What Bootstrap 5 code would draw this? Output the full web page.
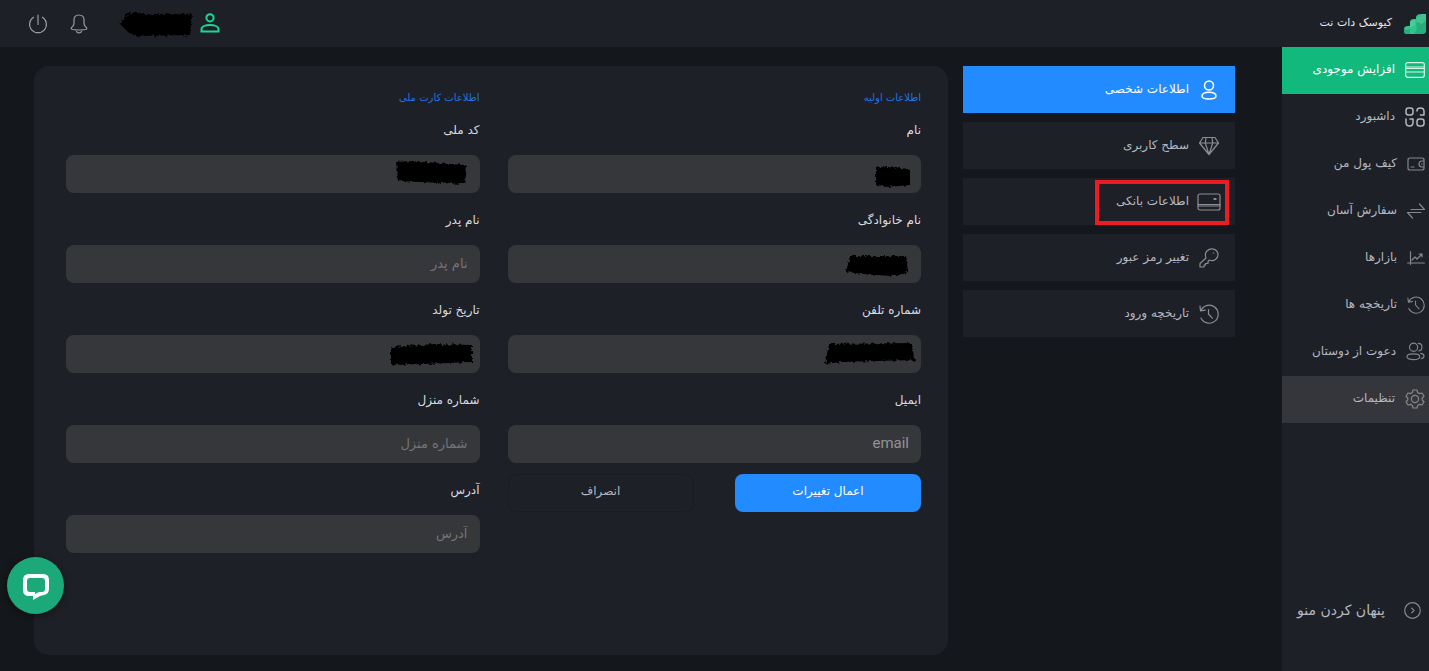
<!DOCTYPE html>
<html lang="fa" dir="rtl">
<head>
<meta charset="utf-8">
<meta name="viewport" content="width=device-width, initial-scale=1">
<title>کیوسک دات نت</title>
<link href="https://cdn.jsdelivr.net/npm/bootstrap@5.3.0/dist/css/bootstrap.min.css" rel="stylesheet">
<style>
  :root { --page: #14171b; --panel: #1e2027; --field: #36373b; --blue: #228bff; --green: #12b97c; --ink: #b4b8c2; }
  body { background: var(--page); color: var(--ink); font-family: "DejaVu Sans", sans-serif; font-size: 12px; line-height: 20px; }
  svg { flex: none; fill: none; stroke: currentColor; stroke-linecap: round; stroke-linejoin: round; stroke-width: 1.2; }
  .topbar { background: var(--panel); height: 47px; padding: 0 2px 0 28px; }
  .brand { color: #e6e8ec; font-size: 11px; gap: 11px; }
  .icon-btn { background: none; border: 0; padding: 0; color: #9a9ca1; display: flex; margin-right: 22px; }
  .account { color: #19d896; stroke-width: 2; stroke-linejoin: miter; margin-bottom: 2px; }
  .side { background: var(--panel); width: 147px; flex: none; }
  .side a { color: var(--ink); text-decoration: none; height: 47px; padding: 0 4px 2px 0; gap: 10px; display: flex; align-items: center; white-space: nowrap; }
  .side a span, .setting span, .brand span { margin-bottom: 2px; }
  .side svg { color: #85878d; }
  .side a.topup { background: var(--green); color: #fff; }
  .side a.topup svg { color: #d6f5e8; }
  .side a.dash svg { color: #b4b6bc; stroke-width: 1.5; }
  .side a.current { background: #35363b; }
  .side a.fold { font-size: 14px; padding-right: 8px; gap: 19px; margin-bottom: 36px; }
  .content-area { padding: 19px 47px 16px 34px; gap: 15px; }
  .settings { width: 272px; flex: none; gap: 9px; }
  .setting { position: relative; background: var(--panel); color: var(--ink); text-decoration: none; height: 47px; padding: 0 14px; gap: 8px; }
  .setting svg { color: #8c8d91; }
  .setting.on { background: var(--blue); color: #fff; }
  .setting.on svg { color: #fff; stroke-width: 1.5; }
  .highlight { position: absolute; top: 2px; right: 6px; width: 134px; height: 45px; border: 4px solid #ec1c24; pointer-events: none; }
  .profile { background: var(--panel); border-radius: 15px; padding: 22px 27px 22px 32px; }
  .fields { display: grid; grid-template-columns: 1fr 1fr; gap: 28px; }
  .fields h2 { color: #2273e6; font-size: 10px; line-height: 20px; margin: 0 0 11px; font-weight: 400; }
  .field { position: relative; margin-bottom: 16px; }
  .field label { display: block; color: #d9dbe0; margin-bottom: 14px; height: 22px; line-height: 22px; }
  .field .form-control { background: var(--field); border: 0; border-radius: 8px; color: #e6e8ec; height: 38px; padding: 0 12px 2px; font-size: 13px; box-shadow: none; }
  .field .form-control::placeholder { color: #74757a; opacity: 1; }
  .field .latin { font-family: Roboto, sans-serif; font-size: 15px; }
  .field .latin::placeholder { color: #929398; }
  .ink { position: absolute; fill: #000; stroke: none; bottom: 4px; }
  .actions { margin-top: -5px; }
  .actions .btn { width: 45%; height: 38px; border-radius: 8px; font-size: 12px; padding: 0 0 4px; }
  .save { background: var(--blue); color: #fff; }
  .cancel { border: 1px solid #1a1c22; color: var(--ink); }
  .chat { position: fixed; left: 7px; bottom: 57px; width: 57px; height: 57px; border: 0; border-radius: 50%; background: #1ca97a; box-shadow: 0 2px 8px #0006; padding: 0; display: flex; align-items: center; justify-content: center; }
</style>
</head>
<body>
<svg width="0" height="0" class="position-absolute" aria-hidden="true">
  <filter id="rough" x="-10%" y="-20%" width="120%" height="140%"><feTurbulence type="fractalNoise" baseFrequency=".3" numOctaves="2" seed="4"/><feDisplacementMap in="SourceGraphic" scale="5"/><feGaussianBlur stdDeviation=".7"/></filter>
  <symbol id="history" viewBox="0 0 20 20"><path d="M2.200 6A9 9 0 1 1 2 14M1 2.200l.6 4.600 4.600-.6M9.500 5.500V10l3.800 4.200"/></symbol>
</svg>
<div class="d-flex flex-column min-vh-100">
  <header class="topbar d-flex align-items-center justify-content-between">
    <div class="brand d-flex align-items-center">
      <svg width="24" height="22" viewBox="0 0 24 22"><g stroke="none"><path fill="#2fc58c" d="M1 16q0-3 4-3h2V9q0-3 4-3h2V4q1-3 5-3h5v17q0 3-4 3H3q-2 0-2-3z"/><path fill="#18956a" d="M1 16q3 2 6 0v5H3q-2 0-2-3zM13 10q4-2 4-9h6v17q0 3-4 3h-8q4-4 2-11z" opacity=".45"/><path fill="#7fe0b8" d="M18 1h5v7l-5 3-4-2zM7 9l5-2v5l-5 3z" opacity=".35"/></g></svg>
      <span>کیوسک دات نت</span>
    </div>
    <div class="d-flex align-items-center">
      <svg class="account" width="20" height="20" viewBox="0 0 20 20"><circle cx="10" cy="4.800" r="3.600"/><path d="M1.500 18.500v-2.200c0-5.600 17-5.600 17 0v2.200z"/></svg>
      <svg width="76" height="30" viewBox="0 0 76 30" style="margin:0 6px 0 8px"><path d="M2 15 8 6l8-3 8 2 50 0-2 21-54 1-8-4z" fill="#000" stroke="none" filter="url(#rough)"/></svg>
      <button class="icon-btn" aria-label="اعلان ها"><svg width="18" height="20" viewBox="0 0 18 20"><path d="M9 1C5.400 1 4 3.200 4 6v3.500c0 3-2.800 3.500-2.800 5 0 2 15.600 2 15.600 0 0-1.500-2.800-2-2.800-5V6c0-2.800-1.400-5-5-5zM6.500 17.500c.7 1.900 4.300 1.900 5 0"/></svg></button>
      <button class="icon-btn" aria-label="خروج"><svg width="20" height="20" viewBox="0 0 20 20"><path d="M5.500 3.200a8.400 8.400 0 1 0 9 0M10 1v9.500"/></svg></button>
    </div>
  </header>
  <div class="d-flex flex-grow-1">
    <nav class="side d-flex flex-column">
      <a class="topup" href="#"><svg width="20" height="16" viewBox="0 0 20 16"><rect x=".7" y=".7" width="18.600" height="14.600" rx="2"/><path d="M1 5h18M1 6.500h18M1 10h18"/></svg><span>افزایش موجودی</span></a>
      <a class="dash" href="#"><svg width="20" height="20" viewBox="0 0 20 20"><rect x="1" y="1" width="7" height="7" rx="2.500"/><path d="M12 4V3.500Q12 1 15.500 1T19 4.500V8h-3.500M1 12v3.500Q1 19 4.500 19T8 15.500V12H5"/><rect x="12" y="12" width="7" height="7" rx="2.500"/></svg><span>داشبورد</span></a>
      <a href="#"><svg width="18" height="14" viewBox="0 0 18 14"><path d="M17 4V3q0-2-2-2H3Q1 1 1 3v8q0 2 2 2h12q2 0 2-2v-1M17 4h-2q-3 0-3 3t3 3h2zM4 10h3M14.500 7h.5"/></svg><span>کیف پول من</span></a>
      <a href="#"><svg width="18" height="16" viewBox="0 0 18 16"><path d="M4 6.500h13.500L12.500 1M14 9.500H.5L5.500 15"/></svg><span>سفارش آسان</span></a>
      <a href="#"><svg width="18" height="14" viewBox="0 0 18 14"><path d="M3.500.7v12.600M.7 12h16.600M5 9l3-3 2 2 5-5M12 3h3v3"/></svg><span>بازارها</span></a>
      <a href="#"><svg width="18" height="18"><use href="#history"/></svg><span>تاریخچه ها</span></a>
      <a href="#"><svg width="19" height="19" viewBox="0 0 20 20"><circle cx="8" cy="5.500" r="4.300"/><path d="M13 1.500c5 0 5 7.500.5 7.800M1 15.500C1 11.500 14.500 11.500 14.500 15.500S1 19.500 1 15.500M15.500 12c4.500.8 4.500 4.500.7 5.500"/></svg><span>دعوت از دوستان</span></a>
      <a class="current" href="#"><svg width="20" height="20" viewBox="0 0 20 20"><circle cx="10" cy="10" r="3.600"/><path d="M8 1h4l.6 2.500 2 1.100L17 4l2 3.300-1.800 1.700v2L19 12.700 17 16l-2.400-.6-2 1.100L12 19H8l-.6-2.500-2-1.100L3 16l-2-3.300L2.800 11V9L1 7.300 3 4l2.400.6 2-1.100z"/></svg><span>تنظیمات</span></a>
      <a class="fold mt-auto" href="#"><svg width="17" height="17" viewBox="0 0 17 17"><circle cx="8.500" cy="8.500" r="7.800"/><path d="M7.700 6.200 10 8.500l-2.300 2.300"/></svg><span>پنهان کردن منو</span></a>
    </nav>
    <main class="content-area d-flex flex-grow-1">
      <nav class="settings d-flex flex-column">
        <a class="setting on d-flex align-items-center" href="#"><svg width="24" height="20" viewBox="0 0 24 20"><circle cx="12" cy="5.500" r="4.500"/><path d="M5 16c0-5 14-5 14 0 0 4-14 4-14 0z"/></svg><span>اطلاعات شخصی</span></a>
        <a class="setting d-flex align-items-center" href="#"><svg width="24" height="20" viewBox="0 0 24 20"><path d="M6 1.500h12L21.500 7 12 18.500 2.500 7zM2.500 7h19M9 1.500 8.300 7 12 18.500 15.700 7 15 1.500"/></svg><span>سطح کاربری</span></a>
        <a class="setting d-flex align-items-center" href="#"><svg width="24" height="18" viewBox="0 0 24 18"><rect x="1" y="1" width="22" height="16" rx="2"/><path d="M1 11.500h22M1 13h22M17 5.500h2M17 6.500h2"/></svg><span>اطلاعات بانکی</span><i class="highlight"></i></a>
        <a class="setting d-flex align-items-center" href="#"><svg width="24" height="20" viewBox="0 0 24 20"><path d="M9 10C6.500 3.500 12 .8 15 .9c4 .1 6 3 6 5.600 0 4-4 7.500-8.500 5.500L11 13.500v2H8.500V17H7v2H3v-3.500zM16.300 5h.5"/></svg><span>تغییر رمز عبور</span></a>
        <a class="setting d-flex align-items-center" href="#"><svg width="24" height="20"><use href="#history"/></svg><span>تاریخچه ورود</span></a>
      </nav>
      <form class="profile flex-grow-1">
        <div class="fields">
          <section>
            <h2>اطلاعات اولیه</h2>
            <div class="field"><label for="name">نام</label><input id="name" class="form-control"><svg class="ink" style="right:9px" width="38" height="26"><path filter="url(#rough)" d="m2 4 12 0 22 2v16l-22 2-12-2z"/></svg></div>
            <div class="field"><label for="family">نام خانوادگی</label><input id="family" class="form-control"><svg class="ink" style="right:11px" width="66" height="28"><path filter="url(#rough)" d="m6 5 56 0 2 16-10 4-26-1-26-3z"/></svg></div>
            <div class="field"><label for="phone">شماره تلفن</label><input id="phone" class="form-control"><svg class="ink" style="right:4px" width="94" height="30"><path filter="url(#rough)" d="m6 5 82-1 4 17-74 2-16 2z"/></svg></div>
            <div class="field"><label for="email">ایمیل</label><input id="email" class="form-control latin" placeholder="email"></div>
            <div class="actions d-flex justify-content-between"><button type="button" class="btn save">اعمال تغییرات</button><button type="button" class="btn cancel">انصراف</button></div>
          </section>
          <section>
            <h2>اطلاعات کارت ملی</h2>
            <div class="field"><label for="code">کد ملی</label><input id="code" class="form-control"><svg class="ink" style="right:12px" width="74" height="30"><path filter="url(#rough)" d="m2 3 16-1 54 4-2 19-22-1-44-2z"/></svg></div>
            <div class="field"><label for="father">نام پدر</label><input id="father" class="form-control" placeholder="نام پدر"></div>
            <div class="field"><label for="birth">تاریخ تولد</label><input id="birth" class="form-control"><svg class="ink" style="right:5px" width="86" height="28"><path filter="url(#rough)" d="m2 6 44-3 37 1v17l-48 2-33 1z"/></svg></div>
            <div class="field"><label for="home">شماره منزل</label><input id="home" class="form-control" placeholder="شماره منزل"></div>
            <div class="field"><label for="address">آدرس</label><input id="address" class="form-control" placeholder="آدرس"></div>
          </section>
        </div>
      </form>
    </main>
  </div>
</div>
<button class="chat" aria-label="گفتگو"><svg width="28" height="28" viewBox="0 0 28 28"><g stroke="none" fill="#fff"><path fill-rule="evenodd" d="M7 2h14q6 0 6 6v9q0 5-5 6l-4 1-7 4v-4H7q-6 0-6-6V8q0-6 6-6zM8 6q-3 0-3 3v8q0 3 3 3h5v2l4-2h3q3 0 3-3V9q0-3-3-3z"/></g></svg></button>
<script src="https://cdn.jsdelivr.net/npm/bootstrap@5.3.0/dist/js/bootstrap.bundle.min.js"></script>
</body>
</html>
